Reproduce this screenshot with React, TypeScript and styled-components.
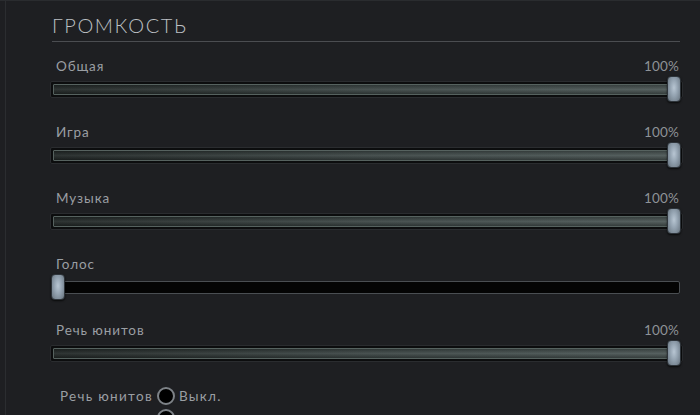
import React from "react";
import styled, { createGlobalStyle } from "styled-components";

const GlobalStyle = createGlobalStyle`
  html, body {
    margin: 0;
    padding: 0;
    background: #1e1f22;
    overflow: hidden;
  }
  body {
    font-family: "Lato", "Open Sans", sans-serif;
  }
`;

const Panel = styled.div`
  width: 700px;
  height: 415px;
  box-sizing: border-box;
  border-top: 1px solid #2a2c2f;
  padding-left: 5px;
  overflow: hidden;
`;

const Inner = styled.div`
  height: 100%;
  border-left: 1px solid #2b2d30;
  padding-left: 44px;
`;

const Section = styled.div`
  width: 633px;
`;

const Header = styled.h2`
  margin: 0 3px 0 2px;
  height: 41px;
  box-sizing: border-box;
  padding-top: 12px;
  border-bottom: 1px solid #4b4d51;
  font-weight: 300;
  font-size: 20px;
  line-height: 24px;
  letter-spacing: 1.6px;
  color: #bcc0c4;
`;

const Row = styled.div`
  height: 66px;
  padding-top: 16px;
  box-sizing: border-box;
`;

const LabelLine = styled.div`
  display: flex;
  justify-content: space-between;
  height: 16px;
  line-height: 16px;
  font-size: 13.5px;
  letter-spacing: 0.9px;
  color: #9a9ea3;
  padding: 0 4px 0 6px;
  margin-bottom: 2px;
`;

const Percent = styled.span`
  color: #8e9297;
  letter-spacing: 0.2px;
`;

const Slider = styled.div`
  position: relative;
  height: 26px;
  display: flex;
  align-items: center;
`;

const Track = styled.div<{ $empty?: boolean }>`
  flex: 1;
  height: ${(p) => (p.$empty ? "13px" : "17px")};
  margin-right: ${(p) => (p.$empty ? "3px" : "0")};
  margin-left: ${(p) => (p.$empty ? "2px" : "0")};
  box-sizing: border-box;
  border-radius: 2px;
  background: ${(p) => (p.$empty ? "#040404" : "#0c0d0e")};
  border: 1px solid ${(p) => (p.$empty ? "#4a4e52" : "#2a2c2f")};
  padding: 2px;
  display: flex;
`;

const Fill = styled.div`
  height: 100%;
  box-sizing: border-box;
  border: 1px solid #56625f;
  border-radius: 1px;
  background: linear-gradient(
      to bottom,
      rgba(0, 0, 0, 0.25),
      rgba(255, 255, 255, 0.05) 50%,
      rgba(0, 0, 0, 0.3)
    ),
    linear-gradient(to right, #232928, #3e4847 50%, #4d5857);
`;

const Thumb = styled.div`
  position: absolute;
  top: 0;
  width: 14px;
  height: 26px;
  box-sizing: border-box;
  border-radius: 4px;
  border: 1px solid #2e343a;
  background: radial-gradient(
    ellipse at 50% 45%,
    #b8c6d3 0%,
    #93a2b0 45%,
    #68747f 100%
  );
  box-shadow: 0 1px 2px rgba(0, 0, 0, 0.7);
`;

const RadioRow = styled.div`
  display: flex;
  align-items: flex-start;
  margin-top: 15px;
  padding-left: 10px;
  font-size: 13.5px;
  letter-spacing: 1.3px;
  color: #9a9ea3;
`;

const RadioLabel = styled.span`
  height: 18px;
  line-height: 18px;
  margin-right: 4px;
`;

const RadioStack = styled.div`
  display: flex;
  flex-direction: column;
  gap: 4px;
`;

const RadioOption = styled.div`
  display: flex;
  align-items: center;
  height: 18px;
  line-height: 18px;
`;

const Radio = styled.span`
  width: 18px;
  height: 18px;
  box-sizing: border-box;
  border-radius: 50%;
  border: 2px solid #7d8287;
  background: #000;
  margin-right: 4px;
  flex: none;
`;

const TRACK_W = 633;

const VolumeSlider: React.FC<{ label: string; value: number }> = ({ label, value }) => {
  const left = (value / 100) * (TRACK_W - 2 - 14) + 1 - (value / 100);
  return (
    <Row>
      <LabelLine>
        <span>{label}</span>
        {value > 0 && <Percent>{value}%</Percent>}
      </LabelLine>
      <Slider>
        <Track $empty={value === 0}>
          {value > 0 && <Fill style={{ width: `${value}%` }} />}
        </Track>
        <Thumb style={{ left }} />
      </Slider>
    </Row>
  );
};

const sliders = [
  { label: "Общая", value: 100 },
  { label: "Игра", value: 100 },
  { label: "Музыка", value: 100 },
  { label: "Голос", value: 0 },
  { label: "Речь юнитов", value: 100 },
];

export default function App() {
  return (
    <>
      <GlobalStyle />
      <Panel>
        <Inner>
          <Section>
            <Header>ГРОМКОСТЬ</Header>
            {sliders.map((s) => (
              <VolumeSlider key={s.label} label={s.label} value={s.value} />
            ))}
            <RadioRow>
              <RadioLabel>Речь юнитов</RadioLabel>
              <RadioStack>
                <RadioOption>
                  <Radio />
                  <span>Выкл.</span>
                </RadioOption>
                <RadioOption>
                  <Radio aria-label="Вкл." />
                </RadioOption>
              </RadioStack>
            </RadioRow>
          </Section>
        </Inner>
      </Panel>
    </>
  );
}
